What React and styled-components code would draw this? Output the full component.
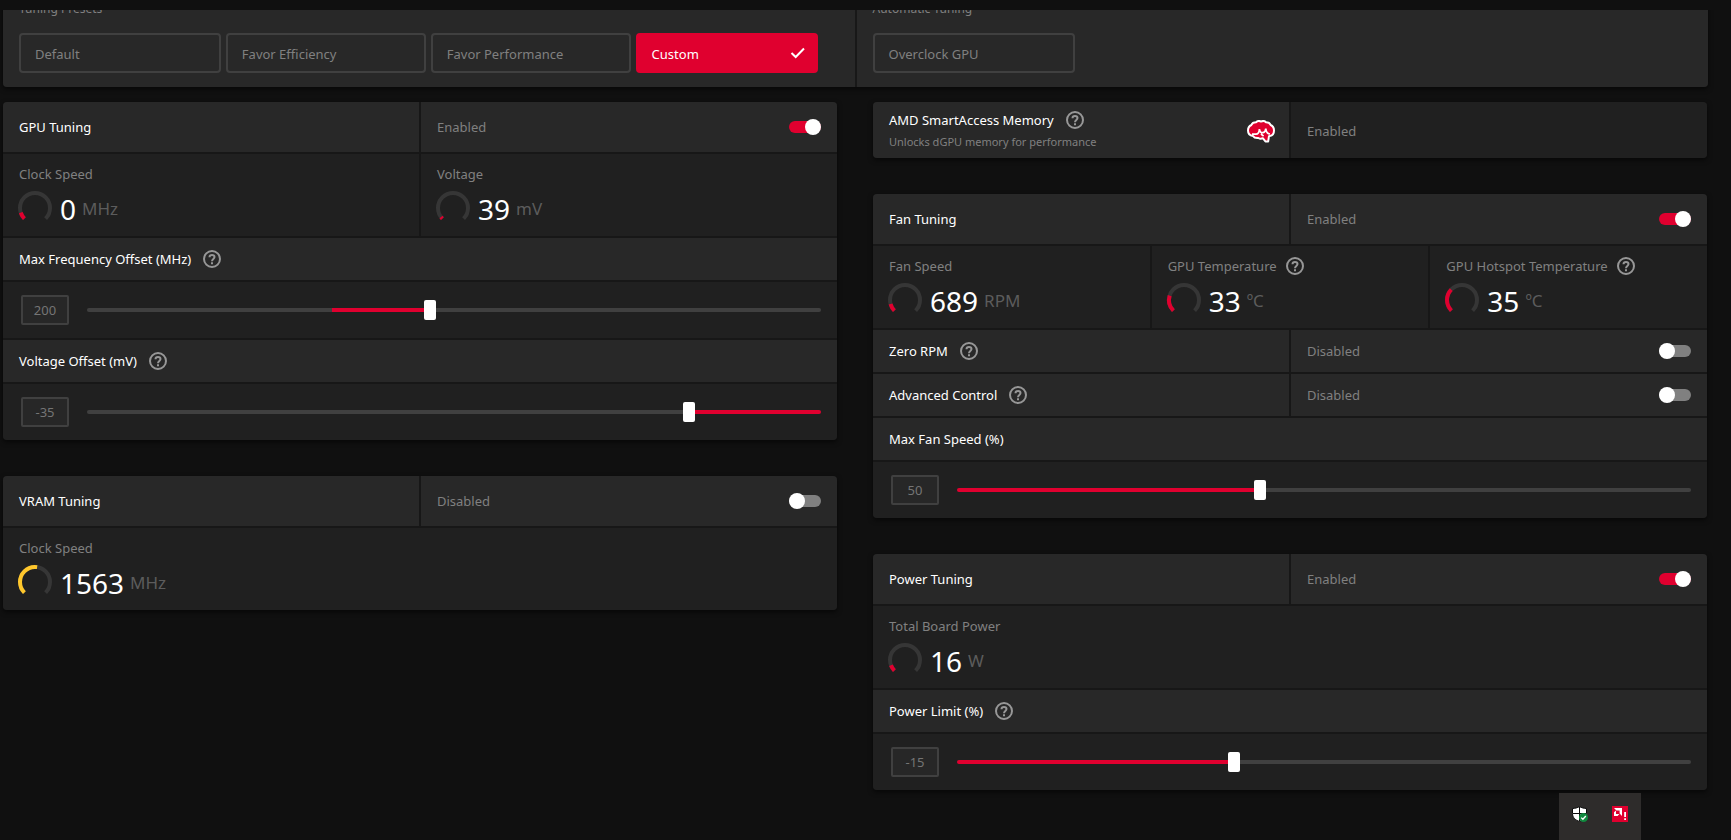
import React, { useId, useState } from 'react'
import styled, { createGlobalStyle } from 'styled-components'

const GlobalStyle = createGlobalStyle`
    * {
        box-sizing: border-box;
    }
    body {
        margin: 0;
        background: #101010;
        color: #fff;
        font-family: "Noto Sans", "Open Sans", sans-serif;
        font-size: 13px;
        line-height: 20px;
    }
    button, input {
        font: inherit;
    }
`;

const Page = styled.div`
    height: 100vh;
    padding-top: 10px;
    overflow: hidden;
`;

/* the page is scrolled a little, so the preset panel starts above the viewport */
const Viewport = styled.main`
    height: 100%;
    overflow: hidden;
`;

const Content = styled.div`
    margin-top: -24px;
    padding: 0 23px 24px 3px;
`;

const PresetPanel = styled.section`
    display: grid;
    grid-template-columns: 1fr 1fr;
    gap: 2px;
    margin-bottom: 15px;
    border-radius: 4px;
    overflow: hidden;
    background: #181818;
    box-shadow: 0 2px 5px rgba(0, 0, 0, 0.6);
`;

const PresetGroup = styled.div`
    padding: 15px 37px 14px 16px;
    background: #282828;
`;

const PresetLabel = styled.div`
    margin-bottom: 16px;
    color: #808080;
    font-size: 12px;
    line-height: 16px;
`;

const PresetList = styled.div`
    display: grid;
    grid-template-columns: ${props => props.$single ? '202px' : '202fr 200fr 200fr 182fr'};
    gap: 5px;
`;

const PresetButton = styled.button`
    display: flex;
    align-items: center;
    justify-content: space-between;
    height: 40px;
    padding: 2px 10px 0 14px;
    border: 2px solid ${props => props.$active ? '#e0002f' : '#404040'};
    border-radius: 4px;
    background: ${props => props.$active ? '#e0002f' : 'transparent'};
    color: ${props => props.$active ? '#fff' : '#808080'};
    text-align: left;
    cursor: pointer;
`;

const Columns = styled.div`
    display: grid;
    grid-template-columns: 1fr 1fr;
    align-items: start;
    gap: 36px;
    margin-right: 1px;
`;

const Column = styled.div`
    display: flex;
    flex-direction: column;
    gap: 36px;
`;

const Card = styled.section`
    display: grid;
    gap: 2px;
    border-radius: 4px;
    overflow: hidden;
    background: #171717;
    box-shadow: 0 2px 5px rgba(0, 0, 0, 0.6);
`;

const Split = styled.div`
    display: grid;
    grid-template-columns: repeat(${props => props.$columns || 2}, 1fr);
    gap: 2px;
`;

const Cell = styled.div`
    display: flex;
    align-items: center;
    justify-content: ${props => props.$spread ? 'space-between' : 'flex-start'};
    gap: 12px;
    min-height: ${props => props.$tall ? '50px' : '42px'};
    padding: 0 16px;
    background: ${props => props.$dim ? '#202020' : '#282828'};
`;

const Status = styled.span`
    color: #808080;
`;

const MemoryCell = styled(Cell)`
    min-height: 56px;
    padding: 2px 14px 0 16px;
`;

const MemoryTitle = styled.div`
    display: flex;
    align-items: center;
    gap: 12px;
    height: 22px;
`;

const MemoryNote = styled.div`
    color: #808080;
    font-size: 11px;
    line-height: 22px;
`;

const HelpButton = styled.button`
    display: flex;
    padding: 0;
    border: 0;
    background: none;
    color: #979797;
    cursor: pointer;
`;

const Switch = styled.input`
    display: flex;
    align-items: center;
    appearance: none;
    width: 32px;
    height: 12px;
    margin: 0;
    border-radius: 6px;
    background: #808080;
    cursor: pointer;
    &::before {
        content: '';
        width: 16px;
        height: 16px;
        flex-shrink: 0;
        border-radius: 50%;
        background: #fff;
    }
    &:checked {
        justify-content: flex-end;
        background: #e0002f;
    }
`;

const MetricCell = styled.div`
    height: 82px;
    padding: 9px 16px 0;
    background: #202020;
`;

const MetricLabel = styled.div`
    display: flex;
    align-items: center;
    gap: 9px;
    height: 22px;
    margin-bottom: 5px;
    color: #808080;
`;

const MetricReading = styled.div`
    display: flex;
    align-items: center;
    height: 36px;
`;

const GaugeSvg = styled.svg`
    width: 34px;
    height: 34px;
    overflow: visible;
`;

const MetricValue = styled.span`
    margin: 0 6px 0 7px;
    padding-top: 2px;
    font-size: 28px;
    line-height: 36px;
`;

const MetricUnit = styled.span`
    padding-top: 2px;
    color: #5c5c5c;
    font-size: 17px;
    line-height: 36px;
`;

const SliderCell = styled.div`
    display: flex;
    align-items: center;
    gap: 18px;
    height: 56px;
    padding: 0 16px 0 18px;
    background: #202020;
`;

const ValueBox = styled.input`
    width: 48px;
    height: 30px;
    padding: 0;
    border: 2px solid #404040;
    border-radius: 2px;
    background: #272727;
    color: #757575;
    text-align: center;
`;

const Range = styled.input`
    flex: 1;
    min-width: 0;
    height: 4px;
    margin: 0;
    appearance: none;
    border-radius: 2px;
    background: linear-gradient(
        to right,
        #404040 ${props => props.$from}%,
        #e0002f ${props => props.$from}%,
        #e0002f ${props => props.$to}%,
        #404040 ${props => props.$to}%
    );
    cursor: pointer;
    &::-webkit-slider-thumb {
        appearance: none;
        width: 12px;
        height: 20px;
        border-radius: 2px;
        background: #fff;
    }
`;

const Tray = styled.aside`
    position: fixed;
    right: 90px;
    bottom: 0;
    display: flex;
    gap: 24px;
    height: 47px;
    padding: 13px 13px 0;
    background: #2e2c2b;
`;

function Help({ topic }) {
    return (
        <HelpButton type="button" aria-label={`About ${topic}`}>
            <svg width="18" height="18" viewBox="0 0 18 18" fill="none" stroke="currentColor" strokeWidth="2">
                <circle cx="9" cy="9" r="8" />
                <path d="M6.5 7.2 C6.5 5.8 7.6 5 9 5 C10.4 5 11.5 5.8 11.5 7.1 C11.5 8.9 9 9 9 11.2" />
                <path d="M9 12.2 V14.2" />
            </svg>
        </HelpButton>
    )
}

function CheckIcon() {
    return (
        <svg width="16" height="16" viewBox="0 0 16 16" fill="none" stroke="#fff" strokeWidth="2">
            <path d="M1.5 7 L5.7 11 L14 2.5" />
        </svg>
    )
}

function BrainIcon() {
    return (
        <svg width="28" height="23" viewBox="0 0 28 23">
            <path
                d="M9 2.2 C10.5 .8 12.6 .8 14 1.6 C15.8 .7 17.8 .9 19 2.2 C21.3 2.2 23 3.3 23.6 5 C25.8 6 27 8 27 10.4 C27 13.6 24.8 15.8 22 16.2 L21.2 21.4 L18.4 21.4 L15.8 18.2 C14.2 19 12.6 18.8 11.4 18 C9 18.3 7 17.6 6 16 C3 15.7 1 13.6 1 10.6 C1 8 2.2 6 4.4 5 C5 3.3 6.8 2.2 9 2.2 Z"
                fill="#e0002f"
                stroke="#fff"
                strokeWidth="2"
                strokeLinejoin="round"
            />
            <path
                d="M5 14.2 H9 C11 14.2 12.2 12.4 12.4 9 C12.8 12 14.2 13 16 12.6 C17.8 12.2 18.6 11 18.8 8.6 C19.2 12 20.4 13.8 23 14 M14 14 L16.6 16.2"
                fill="none"
                stroke="#fff"
                strokeWidth="1.7"
            />
        </svg>
    )
}

function ShieldIcon() {
    return (
        <svg width="16" height="16" viewBox="0 0 16 16">
            <path d="M7.5 .5 C9.6 1.9 12 2.4 14.5 2.5 V7.5 C14.5 11.5 11.8 14 7.5 15.5 C3.2 14 .5 11.5 .5 7.5 V2.5 C3 2.4 5.4 1.9 7.5 .5 Z" fill="#fff" stroke="#0b0b0b" />
            <path d="M7.5 1 V15 M1 7.5 H14" stroke="#0b0b0b" />
            <circle cx="11.5" cy="11.5" r="4.5" fill="#10893e" />
            <path d="M9.2 11.6 L10.9 13.2 L13.8 10" fill="none" stroke="#fff" strokeWidth="1.3" />
        </svg>
    )
}

function RadeonIcon() {
    return (
        <svg width="16" height="16" viewBox="0 0 16 16">
            <rect width="16" height="16" fill="#e0002f" />
            <path d="M2 2 H10 V10 L7.6 7.6 V4.4 H4.4 Z M2 6.2 L4 4.4 V8 H7.4 L5.6 10 H2 Z" fill="#fff" />
            <path d="M12.2 6 H14 V11 H12.2 Z M12.2 12.2 H14 V14 H12.2 Z" fill="#fff" />
        </svg>
    )
}

/* three quarters of a ring, open at the bottom */
function Gauge({ level, color = '#e0002f' }) {
    const arc = 'M5.4 27.6 A15 15 0 1 1 26.6 27.6'
    return (
        <GaugeSvg viewBox="0 0 34 34" fill="none" strokeWidth="4">
            <path d={arc} stroke="#363636" />
            <path d={arc} stroke={color} pathLength="100" strokeDasharray={`${level} 100`} />
        </GaugeSvg>
    )
}

function Metric({ label, value, unit, level, color, help }) {
    return (
        <MetricCell>
            <MetricLabel>
                {label}
                {help && <Help topic={label} />}
            </MetricLabel>
            <MetricReading>
                <Gauge level={level} color={color} />
                <MetricValue>{value}</MetricValue>
                <MetricUnit>{unit}</MetricUnit>
            </MetricReading>
        </MetricCell>
    )
}

function SwitchRow({ label, initial, tall, help }) {
    const id = useId()
    const [on, setOn] = useState(initial)
    return (
        <Split>
            <Cell $tall={tall}>
                <label htmlFor={id}>{label}</label>
                {help && <Help topic={label} />}
            </Cell>
            <Cell $tall={tall} $spread>
                <Status>{on ? 'Enabled' : 'Disabled'}</Status>
                <Switch id={id} type="checkbox" checked={on} onChange={e => setOn(e.target.checked)} />
            </Cell>
        </Split>
    )
}

function SliderRow({ label, min, max, origin = min, initial, help }) {
    const id = useId()
    const [value, setValue] = useState(initial)
    const percent = n => (n - min) / (max - min) * 100
    return (
        <>
            <Cell>
                <label htmlFor={id}>{label}</label>
                {help && <Help topic={label} />}
            </Cell>
            <SliderCell>
                <ValueBox type="text" aria-label={`${label} value`} value={value} readOnly />
                <Range
                    id={id}
                    type="range"
                    min={min}
                    max={max}
                    value={value}
                    onChange={e => setValue(Number(e.target.value))}
                    $from={percent(Math.min(origin, value))}
                    $to={percent(Math.max(origin, value))}
                />
            </SliderCell>
        </>
    )
}

const presets = ['Default', 'Favor Efficiency', 'Favor Performance', 'Custom']

function App() {
    const [preset, setPreset] = useState('Custom')
    return (
        <Page>
            <GlobalStyle />
            <Viewport>
                <Content>
                    <PresetPanel>
                        <PresetGroup>
                            <PresetLabel>Tuning Presets</PresetLabel>
                            <PresetList>
                                {presets.map(name => (
                                    <PresetButton key={name} type="button" $active={name === preset} onClick={() => setPreset(name)}>
                                        {name}
                                        {name === preset && <CheckIcon />}
                                    </PresetButton>
                                ))}
                            </PresetList>
                        </PresetGroup>
                        <PresetGroup>
                            <PresetLabel>Automatic Tuning</PresetLabel>
                            <PresetList $single>
                                <PresetButton type="button">Overclock GPU</PresetButton>
                            </PresetList>
                        </PresetGroup>
                    </PresetPanel>
                    <Columns>
                        <Column>
                            <Card>
                                <SwitchRow label="GPU Tuning" initial={true} tall />
                                <Split>
                                    <Metric label="Clock Speed" value="0" unit="MHz" level={10} />
                                    <Metric label="Voltage" value="39" unit="mV" level={3} />
                                </Split>
                                <SliderRow label="Max Frequency Offset (MHz)" min={-500} max={1000} origin={0} initial={200} help />
                                <SliderRow label="Voltage Offset (mV)" min={-200} max={0} origin={0} initial={-35} help />
                            </Card>
                            <Card>
                                <SwitchRow label="VRAM Tuning" initial={false} tall />
                                <Metric label="Clock Speed" value="1563" unit="MHz" level={53} color="#ffc72c" />
                            </Card>
                        </Column>
                        <Column>
                            <Card>
                                <Split>
                                    <MemoryCell $spread>
                                        <div>
                                            <MemoryTitle>
                                                AMD SmartAccess Memory
                                                <Help topic="AMD SmartAccess Memory" />
                                            </MemoryTitle>
                                            <MemoryNote>Unlocks dGPU memory for performance</MemoryNote>
                                        </div>
                                        <BrainIcon />
                                    </MemoryCell>
                                    <MemoryCell $dim>
                                        <Status>Enabled</Status>
                                    </MemoryCell>
                                </Split>
                            </Card>
                            <Card>
                                <SwitchRow label="Fan Tuning" initial={true} tall />
                                <Split $columns={3}>
                                    <Metric label="Fan Speed" value="689" unit="RPM" level={11} />
                                    <Metric label="GPU Temperature" value="33" unit="ºC" level={23} help />
                                    <Metric label="GPU Hotspot Temperature" value="35" unit="ºC" level={33} help />
                                </Split>
                                <SwitchRow label="Zero RPM" initial={false} help />
                                <SwitchRow label="Advanced Control" initial={false} help />
                                <SliderRow label="Max Fan Speed (%)" min={15} max={100} initial={50} />
                            </Card>
                            <Card>
                                <SwitchRow label="Power Tuning" initial={true} tall />
                                <Metric label="Total Board Power" value="16" unit="W" level={9} />
                                <SliderRow label="Power Limit (%)" min={-30} max={10} initial={-15} help />
                            </Card>
                        </Column>
                    </Columns>
                </Content>
            </Viewport>
            <Tray>
                <ShieldIcon />
                <RadeonIcon />
            </Tray>
        </Page>
    )
}

export default App
